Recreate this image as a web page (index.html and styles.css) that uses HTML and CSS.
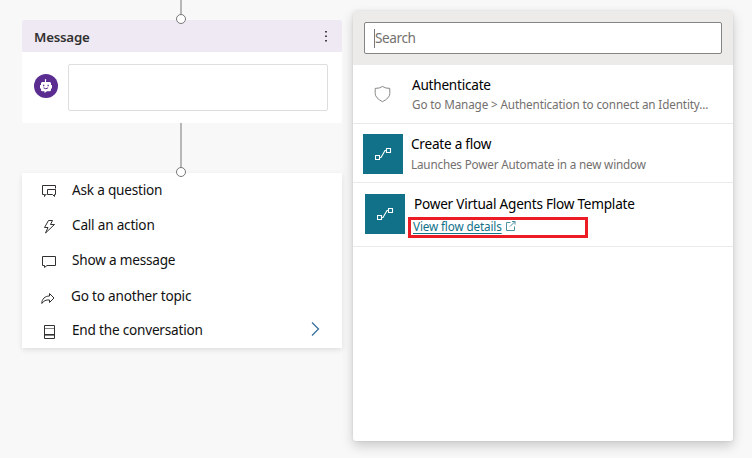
FILE: index.html
```html
<!DOCTYPE html>
<html lang="en">
<head>
<meta charset="utf-8">
<title>Authoring canvas</title>
<link rel="stylesheet" href="styles.css">
</head>
<body>
<main class="canvas">
  <section class="flow">
    <div class="connector first"><i class="joint"></i></div>
    <article class="card">
      <header class="card-head"><h2>Message</h2>
        <svg class="more" width="4" height="12" viewBox="0 0 4 12"><path d="M1 0h2v1.500H1zM1 4.500h2V6H1zM1 9h2v1.500H1z" fill="#45414f"/></svg>
      </header>
      <div class="card-body">
        <svg class="bot" width="24" height="24" viewBox="0 0 24 24"><circle cx="12" cy="12" r="12" fill="#5c2d91"/><path d="M11.500 8V5.500" stroke="#fff"/><circle cx="11.500" cy="6" r=".8" fill="#fff"/><path d="M8 8h8l1 1v2h1v3.500h-1v2l-1 .8h-3L10.500 19v-1.700H8l-1-.8v-2H6V11h1V9z" fill="#fff"/><path d="M9 11.500h1.300M13.500 11.500h1.300" stroke="#5c2d91" stroke-width="1.300"/><path d="M9.500 13.800q2.300 2 4.600 0" fill="none" stroke="#5c2d91"/></svg>
        <div class="message-box"></div>
      </div>
    </article>
    <div class="connector second"><i class="joint"></i></div>
    <ul class="menu">
      <li><svg width="16" height="16" viewBox="0 0 16 16"><path d="M4.500 10.500H3.500L2.500 12.500V10.500H.5V1.500H13.500V4.500M5.500 5.500H13.500V10.500H12.500V12.500L10.500 10.500H5.500Z"/></svg><span>Ask a question</span></li>
      <li><svg width="16" height="16" viewBox="0 0 16 16"><path d="M6.500 1.500H10.500L8.500 5.500H12.500L3.500 14L6 8.500H2.500Z"/></svg><span>Call an action</span></li>
      <li><svg width="16" height="16" viewBox="0 0 16 16"><path d="M.5 2.500H13.500V11.500H5L2.500 13.500V11.500H.5Z"/></svg><span>Show a message</span></li>
      <li class="topic"><svg width="16" height="16" viewBox="0 0 16 16"><path d="M8.500 3.500L13 8L8.500 12.500V10C5 9.500 2.500 11 .8 13.500C.8 9 4 6 8.500 6Z"/></svg><span>Go to another topic</span></li>
      <li class="end"><svg width="16" height="16" viewBox="0 0 16 16"><path d="M2.500 1.500H12.500V14.500H2.500ZM2.500 10.500H12.500"/><path d="M3 4.500H12M3 11.500H12" opacity=".6"/></svg><span>End the conversation</span><svg class="chevron" width="10" height="16" viewBox="0 0 10 16"><path d="M1 1.500L7.500 8L1 14.500"/></svg></li>
    </ul>
  </section>
  <aside class="panel">
    <div class="search-area"><div class="search"><i class="caret"></i><span>Search</span></div></div>
    <div class="row authenticate">
      <div class="shield"><svg width="17" height="18" viewBox="0 0 17 18"><path d="M8.500 1.500Q11.500 3.500 15.800 3.400V8.500Q15.800 13 8.500 16.700Q1.200 13 1.200 8.500V3.400Q5.500 3.500 8.500 1.500Z" fill="none" stroke="#8a8886"/></svg></div>
      <div class="copy"><h3><span>Authenticate</span></h3><p><span>Go to Manage &gt; Authentication to connect an Identity...</span></p></div>
    </div>
    <div class="row create">
      <div class="tile"><svg width="18" height="14" viewBox="0 0 18 14"><path d="M.5 8.500H4.500V12.500H.5ZM11.500 1.500H15.500V5.500H11.500ZM4.500 10.500H6L10 3.500H11.500" fill="none" stroke="#fff" stroke-width="1.100"/></svg></div>
      <div class="copy"><h3><span>Create a flow</span></h3><p><span>Launches Power Automate in a new window</span></p></div>
    </div>
    <div class="row template">
      <div class="tile"><svg width="18" height="14" viewBox="0 0 18 14"><path d="M.5 8.500H4.500V12.500H.5ZM11.500 1.500H15.500V5.500H11.500ZM4.500 10.500H6L10 3.500H11.500" fill="none" stroke="#fff" stroke-width="1.100"/></svg></div>
      <div class="copy"><h3><span>Power Virtual Agents Flow Template</span></h3>
        <div class="highlight"><a>View flow details</a><svg width="10" height="10" viewBox="0 0 10 10"><path d="M4.500 1.500H.5V9.500H8.500V5.500M6 .5H9V3.500M9 .5L4 5.500" fill="none" stroke="#4a929f"/></svg></div>
      </div>
    </div>
  </aside>
</main>
</body>
</html>
```
FILE: styles.css
```css
* { box-sizing: border-box; }
body { margin: 0; background: #f8f8f8; font: 13.6px/20px "Noto Sans", "Open Sans", sans-serif; letter-spacing: -.21px; color: #111; }
h2, h3, p, ul { margin: 0; padding: 0; font-size: inherit; }
h3 { font-weight: 400; }
span, a { white-space: nowrap; }
svg { display: block; flex: none; }
.canvas { display: flex; height: 458px; padding-left: 22px; gap: 11px; overflow: hidden; }
.flow { width: 320px; }
.connector { position: relative; width: 2px; margin-left: 158px; background: #b7b7b7; }
.first { height: 20px; }
.second { height: 50px; }
.joint { position: absolute; z-index: 1; left: -4px; bottom: -4px; width: 10px; height: 10px; border: 1px solid #777; border-radius: 50%; background: #fff; }
.card { height: 103px; background: #fff; border-radius: 2px; }
.card-head { height: 32px; padding: 1px 14px 0 12px; display: flex; align-items: center; justify-content: space-between; background: #efe9f4; border-radius: 2px 2px 0 0; }
h2 { font-weight: 600; font-size: 13.3px; letter-spacing: -.22px; color: #323130; }
.card-body { display: flex; padding: 12px 14px 0 12px; gap: 10px; }
.bot { margin-top: 10px; }
.message-box { flex: 1; height: 47px; border: 1px solid #dedede; border-radius: 2px; }
.menu { height: 175px; padding-top: 7px; list-style: none; background: #fff; box-shadow: 0 2px 5px rgba(0,0,0,.1); }
.menu li { height: 35px; display: flex; align-items: flex-start; padding-left: 20px; }
.menu li > svg:first-child { margin: 4px 14px 0 0; }
.menu li.topic { padding: 1px 0 0 19px; }
.menu path { fill: none; stroke: #323130; }
.menu li > .chevron { margin: 1px 21px 0 auto; }
.menu .chevron path { stroke: #38719f; stroke-width: 1.3; }
.panel { width: 380px; height: 430px; margin-top: 11px; background: #fff; border-radius: 3px; box-shadow: 0 5px 12px rgba(0,0,0,.18), 0 0 3px rgba(0,0,0,.1); }
.search-area { height: 54px; padding: 11px; background: #edebe9; border-radius: 3px 3px 0 0; }
.search { display: flex; align-items: center; height: 32px; padding-left: 9px; background: #fff; border: 1px solid #858585; border-radius: 2px; letter-spacing: -.4px; color: #73706e; }
.caret { width: 1px; height: 19px; background: #777; }
.row { display: flex; padding-left: 10px; border-bottom: 1px solid #eaeaea; }
.authenticate, .create { height: 59px; }
.template { height: 64px; padding-left: 12px; }
.shield { width: 49px; padding: 20px 0 0 11px; }
.authenticate .copy { padding-top: 10px; }
.tile { width: 40px; height: 40px; margin: 10px 8px 0 0; padding: 13px 0 0 12px; background: #117189; }
.template .tile { margin: 11px 3px 0 0; }
.create .copy { padding-top: 10px; }
.template .copy { padding-top: 11px; }
h3 { height: 20px; letter-spacing: -.24px; color: #000; }
p { height: 18px; padding-top: 1px; line-height: 18px; font-size: 11.7px; letter-spacing: -.17px; color: #73706e; }
.authenticate p { padding-top: 0; letter-spacing: -.13px; }
.template h3 { padding-left: 6px; }
.highlight { display: flex; align-items: flex-start; width: 180px; height: 21px; margin-top: 3px; padding-left: 2px; gap: 4px; border: 3px solid #ed1c24; font-size: 11.7px; line-height: 12px; letter-spacing: -.13px; color: #117189; }
.highlight svg { margin-top: 1px; }
.highlight a { text-decoration: underline; text-underline-offset: 2px; }
```
